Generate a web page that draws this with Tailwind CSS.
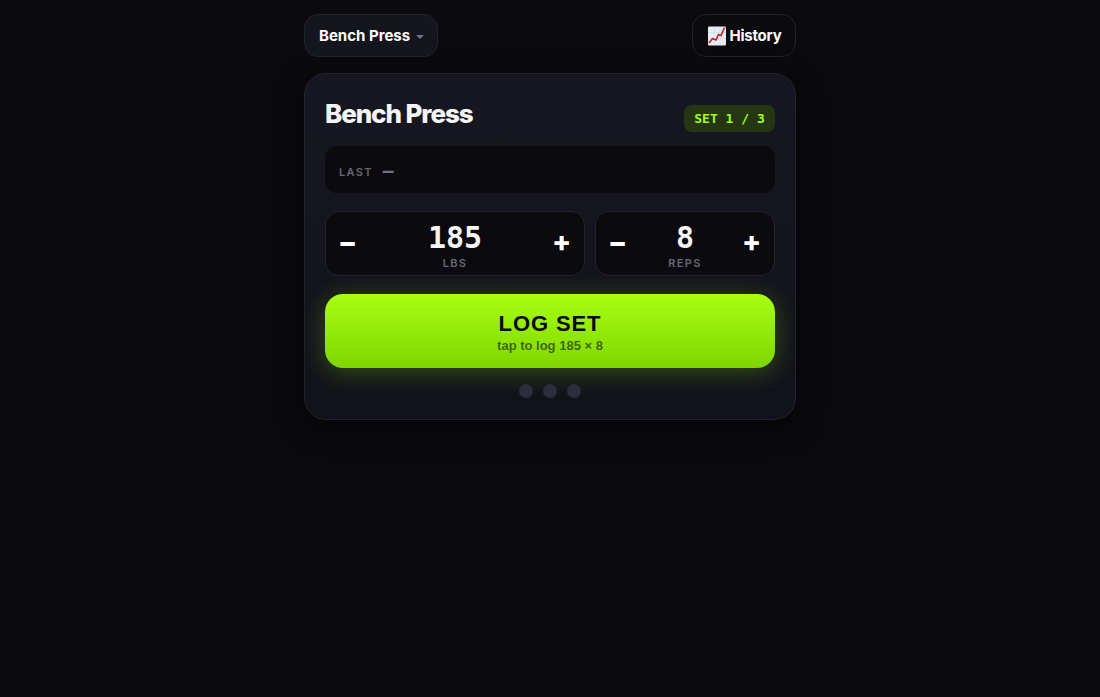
<!DOCTYPE html>
<html lang="en">
<head>
  <meta charset="UTF-8" />
  <meta content="width=device-width, initial-scale=1.0" name="viewport" />
  <title>Bench Press</title>
  <script src="https://cdn.jsdelivr.net/npm/@tailwindcss/browser@4"></script>
</head>
<body class="bg-[#0a0a0f] min-h-screen font-['Inter',sans-serif] text-white">
  <div class="mx-auto w-[492px] pt-[14px]">
    <div class="flex items-center justify-between mb-4">
      <button class="flex items-center h-[43px] w-[134px] pl-[14px] gap-[6px] bg-[#14151d] border border-[#22232d] rounded-[14px] font-bold text-[15px] pt-[2px]">
        Bench Press
        <svg class="w-[8px] h-[4px]" viewBox="0 0 8 4"><path d="M0 0h8L4 4z" fill="#71717f"/></svg>
      </button>
      <button class="flex items-center justify-center h-[43px] w-[104px] gap-[3px] pl-[2px] border border-[#22232d] rounded-[14px] font-bold text-[15px] tracking-[-0.2px] pt-[1px]">
        <svg class="w-[18px] h-[20px] -mt-[1px]" viewBox="0 0 18 20">
          <rect x="0" y="0.5" width="18" height="19" rx="1" fill="#e8edf2"/>
          <path d="M0 6.5h18M0 12.5h18M6 0.5v19M12 0.5v19" stroke="#c9d3dc" stroke-width="0.5" fill="none"/>
          <path d="M1 17L4.5 12.5l3.5 1.5L10.5 8.5l2.5 1L16.5 1.5" stroke="#c8212f" stroke-width="1.7" fill="none" stroke-linejoin="round"/>
        </svg>
        History
      </button>
    </div>

    <div class="bg-gradient-to-b from-[#161720] to-[#12131a] border border-[#22232d] rounded-[22px] px-5 pt-5 pb-[21px] shadow-[0_8px_30px_rgba(0,0,0,0.5)]">
      <div class="flex items-start justify-between h-[52px]">
        <h1 class="font-extrabold text-[26px] leading-[32px] tracking-[-1.1px] mt-[4px] text-[#f5f5f7]">Bench Press</h1>
        <span class="flex items-center justify-center w-[91px] h-[27px] mt-[11px] rounded-[8px] bg-[#263613] text-[#a3ff12] font-bold text-[13px] font-['DejaVu_Sans_Mono',monospace]">SET 1 / 3</span>
      </div>

      <div class="flex items-center h-[47px] px-[14px] pt-[5px] gap-[10px] bg-[#0a0a0f] rounded-[12px]">
        <span class="text-[11px] font-semibold tracking-[1.3px] text-[#666672]">LAST</span>
        <span class="text-[#71717f] font-bold text-[18px] leading-none mb-[3px] font-['DejaVu_Sans_Mono',monospace]">—</span>
      </div>

      <div class="grid grid-cols-[260px_180px] gap-[10px] mt-[18px]">
        <div class="flex items-center justify-between h-[65px] px-[14px] bg-[#0a0a0f] border border-[#22232d] rounded-[14px]">
          <span class="font-extrabold text-[28px] leading-none w-[18px] -ml-[2px] -mt-[4px]">−</span>
          <div class="flex flex-col items-center ml-[2px] pt-[2px]">
            <span class="font-bold text-[30px] leading-[36px] font-['DejaVu_Sans_Mono',monospace] text-[#f5f5f7]">185</span>
            <span class="text-[11px] leading-[13px] font-semibold tracking-[1.3px] text-[#666672] mt-[1px]">LBS</span>
          </div>
          <span class="font-extrabold text-[28px] leading-none w-[18px] -mt-[4px] text-right">+</span>
        </div>
        <div class="flex items-center justify-between h-[65px] px-[14px] bg-[#0a0a0f] border border-[#22232d] rounded-[14px]">
          <span class="font-extrabold text-[28px] leading-none w-[18px] -ml-[2px] -mt-[4px]">−</span>
          <div class="flex flex-col items-center ml-[2px] pt-[2px]">
            <span class="font-bold text-[30px] leading-[36px] font-['DejaVu_Sans_Mono',monospace] text-[#f5f5f7]">8</span>
            <span class="text-[11px] leading-[13px] font-semibold tracking-[1.3px] text-[#666672] mt-[1px]">REPS</span>
          </div>
          <span class="font-extrabold text-[28px] leading-none w-[18px] -mt-[4px] text-right">+</span>
        </div>
      </div>

      <button class="flex flex-col items-center justify-center w-full h-[74px] mt-[18px] pt-[4px] rounded-[18px] bg-gradient-to-b from-[#a8ff12] to-[#7ed600] text-[#0a0a0f] font-['Liberation_Sans',sans-serif] font-bold shadow-[0_4px_24px_rgba(163,255,18,0.25)]">
        <span class="text-[22px] leading-[25px] tracking-[0.9px]">LOG SET</span>
        <span class="text-[13px] leading-[18px] mt-[1px] text-[#0a0a0f]/60">tap to log 185 × 8</span>
      </button>

      <div class="flex justify-center gap-[10px] mt-4">
        <span class="w-[14px] h-[14px] rounded-full bg-[#2d2d3d]"></span>
        <span class="w-[14px] h-[14px] rounded-full bg-[#2d2d3d]"></span>
        <span class="w-[14px] h-[14px] rounded-full bg-[#2d2d3d]"></span>
      </div>
    </div>
  </div>
</body>
</html>
